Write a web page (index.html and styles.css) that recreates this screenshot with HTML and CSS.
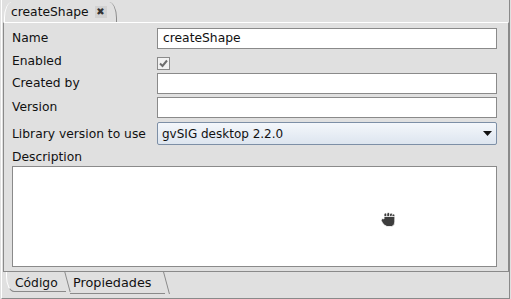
FILE: index.html
```html
<!DOCTYPE html>
<html lang="en">
<head>
    <meta charset="UTF-8">
    <title>createShape</title>
    <link rel="stylesheet" href="styles.css">
</head>
<body>
    <div class="frame">
        <!-- Top editor tab -->
        <div class="top-tabs">
            <div class="doc-tab">
                <span>createShape</span>
                <span class="close">&#10006;</span>
            </div>
        </div>

        <!-- Properties panel -->
        <div class="panel">
            <div class="form">
                <label>Name</label>
                <div class="field">createShape</div>

                <label>Enabled</label>
                <div class="check-cell">
                    <span class="checkbox">
                        <svg width="11" height="11" viewBox="0 0 11 11"><path d="M2 5.5 L4.5 8 L9 2.5" fill="none" stroke="#6e6e6e" stroke-width="2"/></svg>
                    </span>
                </div>

                <label>Created by</label>
                <div class="field"></div>

                <label>Version</label>
                <div class="field"></div>

                <label class="combo-label">Library version to use</label>
                <div class="combo">
                    <span>gvSIG desktop 2.2.0</span>
                    <svg width="9" height="5" viewBox="0 0 9 5"><path d="M0 0 H9 L4.5 5 Z" fill="#111"/></svg>
                </div>
            </div>

            <div class="desc-label">Description</div>
            <div class="textarea">
                <!-- grab cursor over the text area -->
                <svg class="cursor" width="18" height="18" viewBox="0 0 18 18">
                    <g fill="#3d3d3d" stroke="#ffffff" stroke-width="0.8">
                        <rect x="5" y="2" width="3" height="6" rx="1.5"/>
                        <rect x="7.8" y="1.5" width="3" height="6" rx="1.5"/>
                        <rect x="10.6" y="2" width="3" height="6" rx="1.5"/>
                        <rect x="13" y="3" width="2.8" height="6" rx="1.4"/>
                        <path d="M5 5.5 L15.8 5.5 L15.8 11 Q15.8 15 12.5 15.5 L8 15.5 Q5.5 15 3.5 12 L2.2 9.5 Q2 7.5 4 7.5 L5 8 Z"/>
                    </g>
                </svg>
            </div>
        </div>

        <!-- Bottom tabs -->
        <div class="bottom-tabs">
            <div class="btab first">Código</div>
            <div class="btab active">Propiedades</div>
        </div>
    </div>
</body>
</html>
```

FILE: styles.css
```css
body {
    margin: 0;
    padding: 0;
    background-color: #e0e0e0;
    font-family: 'DejaVu Sans', sans-serif;
    font-size: 12.3px;
    color: #111;
}

.frame {
    margin-left: 1px;
    width: 507px;
    height: 298px;
    border-left: 1px solid #ffffff;
    border-right: 1px solid #8a8a8a;
    border-bottom: 1px solid #8a8a8a;
    display: flex;
    flex-direction: column;
}

/* Top tab */
.top-tabs {
    height: 22px;
    flex: 0 0 22px;
    display: flex;
    align-items: flex-end;
}

.doc-tab {
    height: 20px;
    margin-left: 2px;
    padding: 0 9px 0 6px;
    display: flex;
    align-items: center;
    gap: 6px;
    border-left: 1px solid #ffffff;
    border-right: 1px solid #8a8a8a;
    border-top-left-radius: 8px 16px;
    border-top-right-radius: 8px 16px;
}

.close {
    font-size: 10px;
    color: #333;
    background-color: #d2d2d2;
    width: 12px;
    height: 12px;
    line-height: 12px;
    text-align: center;
}

/* Panel */
.panel {
    margin-left: 1px;
    box-sizing: border-box;
    height: 250px;
    flex: 0 0 250px;
    border-top: 1px solid #ffffff;
    border-left: 1px solid #8a8a8a;
    border-right: 1px solid #8a8a8a;
    border-bottom: 1px solid #8a8a8a;
    padding: 5px 11px 4px 8px;
    display: flex;
    flex-direction: column;
}

.form {
    display: grid;
    grid-template-columns: 145px 1fr;
    grid-template-rows: 21px 18px 21px 21px 24px;
    row-gap: 3px;
    align-items: center;
}

.form label {
    line-height: 21px;
}

.form .combo-label {
    align-self: end;
}

.field {
    height: 21px;
    box-sizing: border-box;
    border: 1px solid #8a8a8a;
    background-color: #ffffff;
    padding: 0 5px;
    line-height: 19px;
}

.check-cell {
    display: flex;
    align-items: center;
    padding-top: 4px;
}

.checkbox {
    width: 13px;
    height: 13px;
    box-sizing: border-box;
    border: 1px solid #8a8a8a;
    background-color: #f2f2f2;
    display: flex;
    align-items: center;
    justify-content: center;
}

.combo {
    align-self: end;
    height: 23px;
    box-sizing: border-box;
    border: 1px solid #7d8fa6;
    border-radius: 2px;
    background: linear-gradient(#f4f7fb, #dde5ef);
    display: flex;
    align-items: center;
    justify-content: space-between;
    padding: 0 4px 0 4px;
    font-size: 12px;
}

.desc-label {
    margin-top: 3px;
    height: 18px;
    line-height: 18px;
}

.textarea {
    position: relative;
    flex: 1;
    border: 1px solid #8a8a8a;
    background-color: #ffffff;
}

.cursor {
    position: absolute;
    left: 366px;
    top: 44px;
}

/* Bottom tabs */
.bottom-tabs {
    display: flex;
    flex: 1;
    padding-left: 4px;
}

.btab {
    position: relative;
    height: 17px;
    padding: 2px 6px 0 8px;
    line-height: 18px;
    border-bottom: 1px solid #8a8a8a;
}

.btab::after {
    content: '';
    position: absolute;
    right: -2px;
    top: 0;
    bottom: -1px;
    border-right: 1px solid #8a8a8a;
    transform: skewX(15deg);
}

.btab.first {
    width: 45px;
    border-left: 1px solid #ffffff;
    border-bottom-left-radius: 8px 16px;
}

.btab.active {
    height: 19px;
    margin-left: 4px;
    padding-left: 3px;
    width: 86px;
    font-size: 12.8px;
}
```
